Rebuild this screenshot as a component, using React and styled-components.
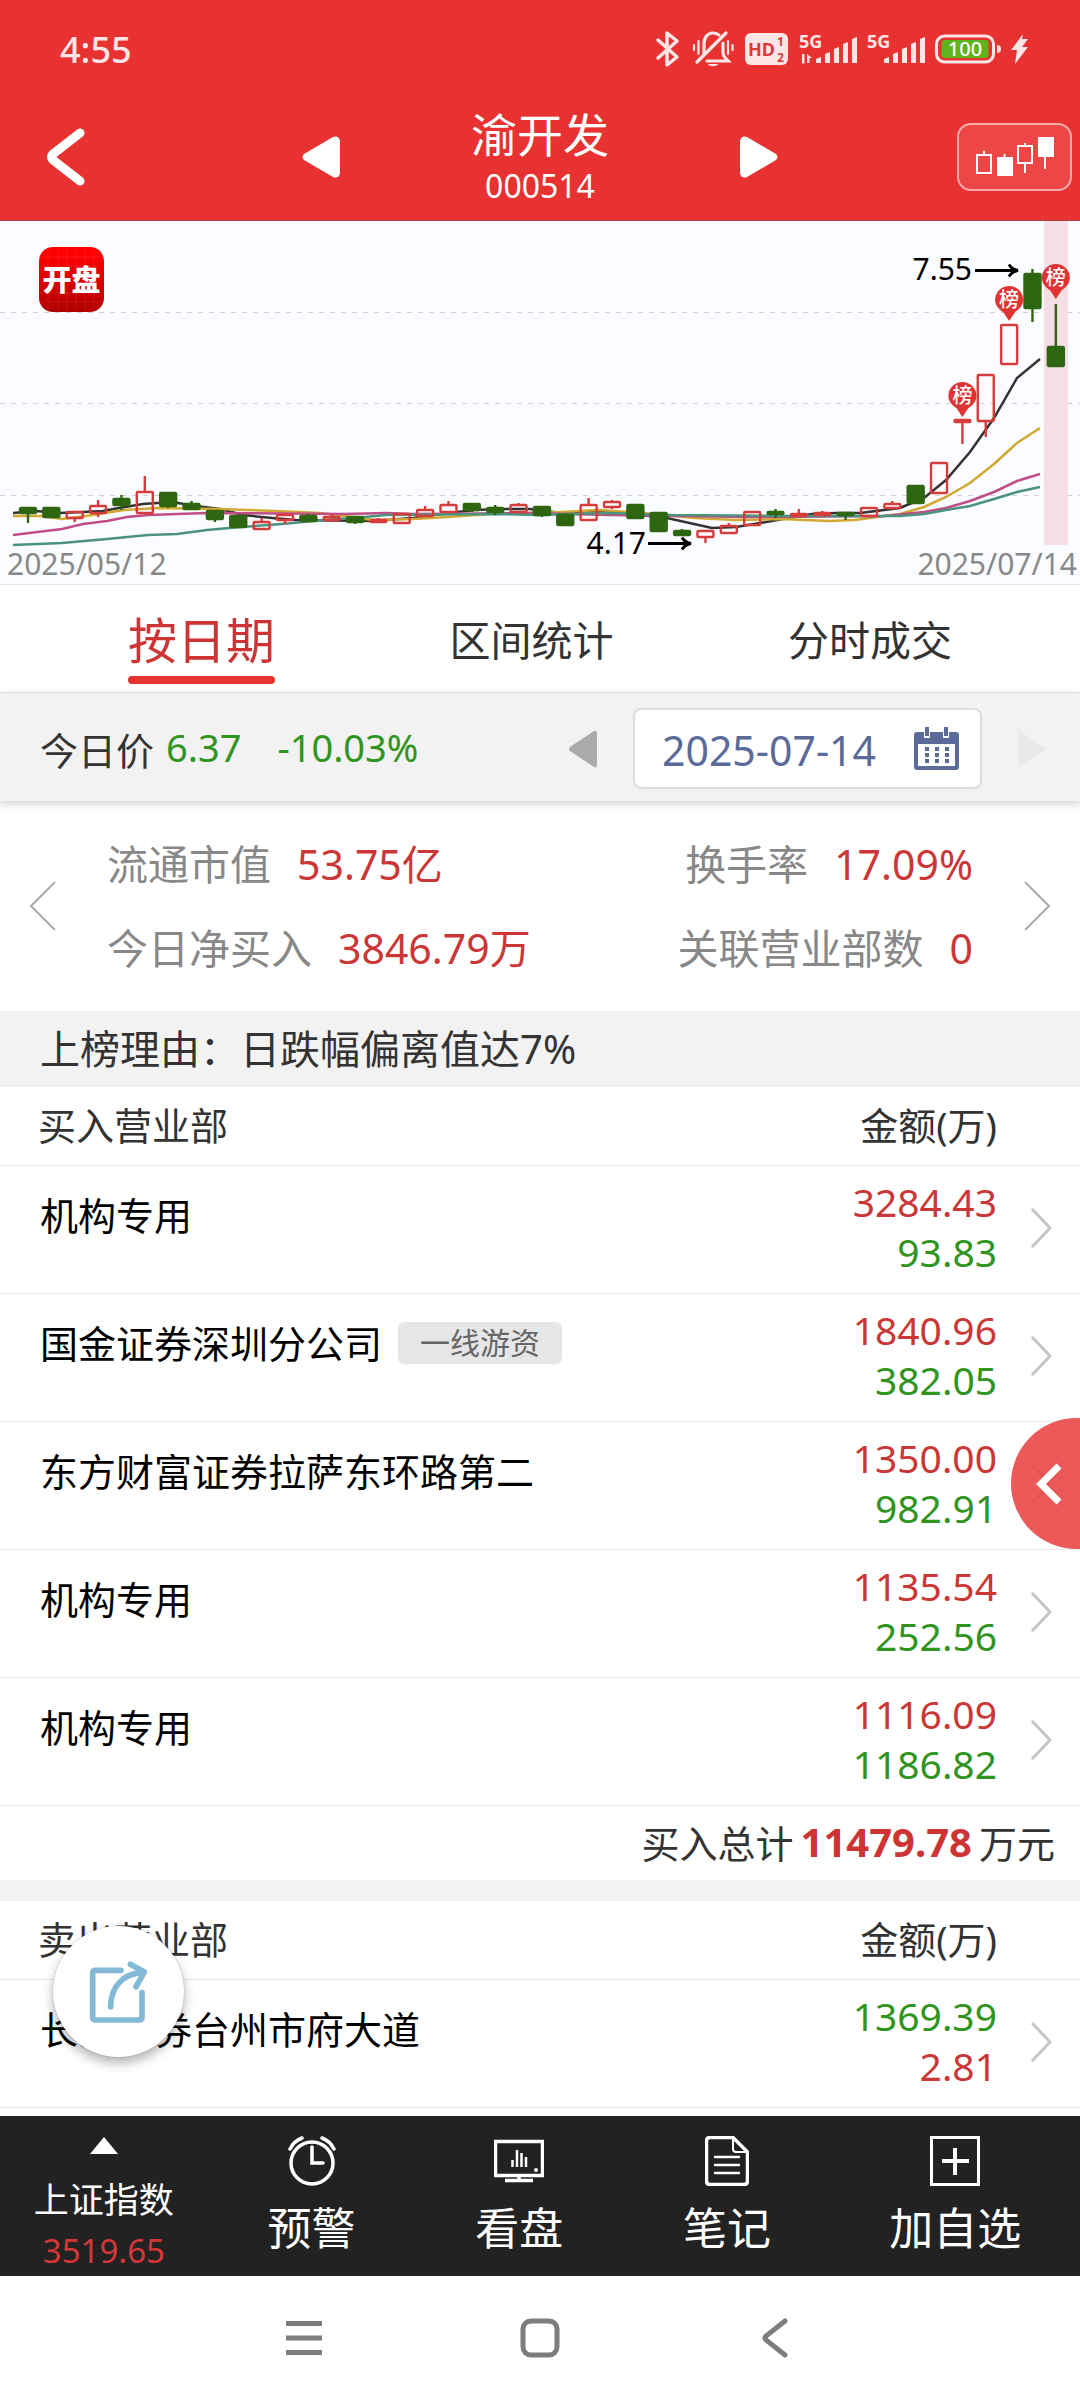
import styled, { createGlobalStyle } from 'styled-components';

const GlobalStyle = createGlobalStyle`
  * {
    box-sizing: border-box;
  }
  body {
    margin: 0;
    background-color: #fff;
    color: #333;
    font-family: 'Noto Sans', 'Noto Sans CJK SC', sans-serif;
  }
  button,
  input {
    font: inherit;
    color: inherit;
  }
  a {
    color: inherit;
    text-decoration: none;
  }
  svg {
    display: block;
  }
`;

const Screen = styled.div`
  position: relative;
  display: flex;
  flex-direction: column;
  min-height: 100vh;
  overflow: hidden;
`;

const IconButton = styled.button`
  display: flex;
  align-items: center;
  justify-content: center;
  padding: 0;
  border: 0;
  background: none;
  cursor: pointer;
`;

// header
const HeaderEl = styled.header`
  background-color: #e83131;
  color: #fff;
  border-bottom: 1px solid #a8404a;
`;

const StatusBar = styled.div`
  display: flex;
  justify-content: space-between;
  align-items: center;
  height: 98px;
  padding: 0 52px 0 60px;
  color: #ffe6e6;
`;

const Clock = styled.span`
  font-size: 36px;
  font-weight: 500;
`;

const StatusIcons = styled.div`
  display: flex;
  align-items: center;
  gap: 10px;
`;

const NavRow = styled.div`
  display: grid;
  grid-template-columns: 1fr 476px 1fr;
  align-items: center;
  height: 122px;
  padding-bottom: 4px;
`;

const StockSwitch = styled.div`
  display: flex;
  justify-content: space-between;
  align-items: center;
`;

const StockTitle = styled.div`
  text-align: center;
`;

const StockName = styled.h1`
  margin: 0;
  font-size: 46px;
  font-weight: 400;
  line-height: 58px;
`;

const StockCode = styled.div`
  font-size: 32px;
  line-height: 46px;
`;

const BackButton = styled(IconButton)`
  justify-self: start;
  margin-left: 46px;
`;

const ChartButton = styled(IconButton)`
  justify-self: end;
  width: 115px;
  height: 68px;
  margin-right: 8px;
  border: 2px solid #f7aaaa;
  border-radius: 14px;
  background-color: #ec4646;
`;

// chart
const ChartBox = styled.section`
  background-color: #fbfcff;
  border-bottom: 1px solid #e6e8eb;
  svg {
    width: 100%;
    height: auto;
  }
`;

// tabs
const Tabs = styled.nav`
  display: flex;
  justify-content: space-between;
  height: 108px;
  padding: 0 128px;
  border-bottom: 1px solid #e2e2e2;
`;

const Tab = styled.a`
  display: flex;
  flex-direction: column;
  align-items: center;
  padding-top: 19px;
  font-size: ${(props) => (props.$active ? '49px' : '41px')};
  line-height: 72px;
  color: ${(props) => (props.$active ? '#cf3434' : '#333')};
  &::after {
    content: '';
    width: 100%;
    height: 8px;
    border-radius: 4px;
    background-color: ${(props) => (props.$active ? '#e63232' : 'transparent')};
  }
`;

const PriceBar = styled.section`
  display: flex;
  justify-content: space-between;
  align-items: center;
  height: 108px;
  padding: 3px 34px 0 40px;
  background-color: #f2f2f2;
  box-shadow: 0 3px 8px rgba(0, 0, 0, 0.18);
`;

const PriceText = styled.div`
  display: flex;
  font-size: 38px;
`;

const Price = styled.span`
  margin-left: 12px;
  color: #2f9420;
`;

const Change = styled.span`
  margin-left: 36px;
  color: #2f9420;
`;

const DatePicker = styled.div`
  display: flex;
  align-items: center;
  gap: 36px;
`;

const DateField = styled.label`
  display: flex;
  align-items: center;
  justify-content: space-between;
  width: 349px;
  height: 81px;
  padding: 0 21px 0 27px;
  border: 2px solid #dcdcdc;
  border-radius: 8px;
  background-color: #fff;
`;

const DateInput = styled.input`
  width: 236px;
  padding: 2px 0 0;
  border: 0;
  outline: 0;
  background: none;
  font-size: 41px;
  color: #5a6b99;
`;

// summary
const Summary = styled.section`
  display: flex;
  justify-content: space-between;
  align-items: center;
  height: 210px;
  padding: 0 28px;
`;

const SummaryGrid = styled.dl`
  flex: 1;
  display: grid;
  grid-template-columns: auto auto;
  justify-content: space-between;
  margin: 0;
  padding: 0 51px;
`;

const Stat = styled.div`
  display: flex;
  justify-content: ${(props) => (props.$right ? 'flex-end' : 'flex-start')};
  gap: 26px;
  font-size: 41px;
  line-height: 84px;
`;

const StatLabel = styled.dt`
  color: #888;
`;

const StatValue = styled.dd`
  margin: 0;
  color: #cb3737;
`;

const Reason = styled.h2`
  margin: 0;
  padding: 0 40px;
  font-size: 40px;
  font-weight: 400;
  line-height: 76px;
  background-color: #f2f2f2;
`;

// broker tables
const BoardTable = styled.table`
  width: 100%;
  border-collapse: separate;
  border-spacing: 0;
`;

const HeadCell = styled.th`
  height: 79px;
  padding: 0 0 5px 38px;
  border-bottom: 1px solid #e8e8e8;
  font-size: 38px;
  font-weight: 400;
  text-align: ${(props) => (props.$right ? 'right' : 'left')};
`;

const Cell = styled.td`
  height: 128px;
  padding: 0;
  border-bottom: 1px solid #e8e8e8;
  vertical-align: top;
`;

const BrokerCell = styled(Cell)`
  padding: 24px 0 0 40px;
`;

const Broker = styled.a`
  display: flex;
  align-items: center;
  gap: 16px;
  color: #000;
  font-size: 38px;
  line-height: 50px;
`;

const Tag = styled.span`
  padding: 0 22px;
  border-radius: 6px;
  background-color: #e6e6e6;
  color: #666;
  font-size: 30px;
  line-height: 42px;
`;

const AmountCell = styled(Cell)`
  padding-top: 11px;
  text-align: right;
`;

const Amount = styled.div`
  font-size: 39px;
  line-height: 50px;
  color: ${(props) => (props.$up ? '#cb3737' : '#2f9420')};
`;

const ArrowCell = styled(Cell)`
  width: 83px;
  padding: 42px 0 0 33px;
`;

const Total = styled.div`
  display: flex;
  justify-content: flex-end;
  align-items: center;
  gap: 7px;
  height: 74px;
  padding: 0 25px 4px 0;
  font-size: 38px;
  strong {
    font-size: 40px;
    color: #cf3434;
  }
`;

const Divider = styled.div`
  height: 21px;
  background-color: #f2f2f2;
`;

const Main = styled.main`
  flex: 1;
`;

// floating buttons
const SideButton = styled(IconButton)`
  position: absolute;
  right: 0;
  top: 1418px;
  width: 69px;
  height: 131px;
  padding-left: 6px;
  border-radius: 66px 0 0 66px;
  background-color: rgba(233, 64, 64, 0.87);
`;

const ShareButton = styled(IconButton)`
  position: absolute;
  left: 53px;
  bottom: 343px;
  width: 131px;
  height: 131px;
  border-radius: 50%;
  background-color: #fff;
  box-shadow: 0 6px 12px rgba(0, 0, 0, 0.3), 0 0 2px rgba(0, 0, 0, 0.2);
`;

// bottom bars
const BottomBar = styled.nav`
  display: flex;
  height: 160px;
  background-color: #222;
  color: #fff;
`;

const BottomLink = styled.a`
  flex: ${(props) => (props.$wide ? 6 : 5)};
  display: flex;
  flex-direction: column;
  align-items: center;
  padding-top: 20px;
  font-size: 44px;
  line-height: 60px;
  svg {
    margin-bottom: 12px;
  }
`;

const IndexLink = styled(BottomLink)`
  font-size: 35px;
  line-height: 51px;
  svg {
    margin-bottom: 20px;
  }
`;

const IndexValue = styled.span`
  font-size: 33px;
  color: #d63636;
`;

const SystemNav = styled.div`
  display: flex;
  height: 124px;
  padding: 0 186px;
  background-color: #fff;
  button {
    flex: 1;
  }
`;

// [up, top, bottom, high, low]
const candles = [
  [0, 287, 292, 287, 302],
  [0, 287, 296, 286, 297],
  [1, 291, 297, 291, 301],
  [1, 285, 292, 279, 296],
  [0, 278, 284, 274, 289],
  [1, 271, 292, 255, 292],
  [0, 272, 285, 272, 287],
  [0, 283, 288, 280, 288],
  [0, 290, 298, 289, 301],
  [0, 295, 306, 295, 306],
  [1, 301, 308, 297, 308],
  [1, 294, 299, 292, 303],
  [0, 295, 300, 293, 301],
  [1, 296, 299, 293, 301],
  [0, 296, 301, 295, 303],
  [1, 299, 301, 297, 302],
  [1, 293, 302, 293, 302],
  [1, 289, 295, 285, 295],
  [1, 284, 291, 280, 291],
  [0, 283, 289, 282, 291],
  [0, 287, 291, 284, 294],
  [1, 284, 291, 282, 291],
  [0, 286, 294, 286, 296],
  [0, 294, 304, 292, 304],
  [1, 284, 299, 277, 299],
  [1, 281, 286, 279, 288],
  [0, 284, 297, 283, 297],
  [0, 292, 310, 292, 310],
  [0, 310, 314, 308, 315],
  [1, 310, 316, 310, 322],
  [1, 305, 312, 302, 312],
  [1, 291, 304, 291, 304],
  [0, 291, 293, 288, 297],
  [1, 293, 295, 288, 295],
  [1, 292, 294, 290, 295],
  [0, 292, 294, 291, 299],
  [1, 287, 295, 287, 295],
  [1, 283, 287, 280, 287],
  [0, 265, 282, 265, 282],
  [1, 242, 272, 242, 272],
  [1, 199, 201, 199, 223],
  [1, 154, 200, 154, 216],
  [1, 104, 143, 104, 143],
  [0, 53, 87, 48, 101],
  [0, 126, 145, 83, 145],
];

const averages = [
  {
    color: '#333',
    points:
      '13,292 36,290 59,292 83,291 103,290 119,287 143,283 172,281 196,285 220,288 243,294 272,297 296,299 372,300 413,297 448,292 475,289 499,288 530,288 561,292 588,290 623,292 667,297 712,307 736,306 760,302 783,298 812,293 836,292 860,292 900,287 924,277 946,259 970,231 994,197 1017,157 1040,138',
  },
  {
    color: '#d1a932',
    points:
      '13,295 41,295 62,298 86,295 124,289 158,287 220,288 275,290 320,292 344,295 372,299 413,298 448,296 492,293 561,291 599,289 643,292 695,297 736,299 781,298 829,300 855,299 877,296 900,293 924,286 946,276 970,262 994,243 1017,222 1040,207',
  },
  {
    color: '#c04d86',
    points:
      '13,314 62,308 83,303 107,300 127,296 148,294 207,292 344,293 386,292 413,293 530,292 609,294 678,295 747,296 884,295 924,291 946,287 970,280 994,271 1017,260 1040,253',
  },
  {
    color: '#4a937f',
    points:
      '13,324 62,322 107,318 148,314 177,313 207,309 241,306 282,303 324,299 365,296 386,294 496,293 537,294 609,292 671,294 781,295 900,295 924,293 946,289 970,285 994,278 1017,271 1040,266',
  },
];

const pins = [
  [40, 175],
  [42, 79],
  [44, 57],
];

const candleX = (i) => 28 + i * 23.36;

function Candle({ index, data }) {
  const [up, top, bottom, high, low] = data;
  const x = candleX(index);
  const color = up ? '#d63c3c' : '#2f6612';
  return (
    <g stroke={color} strokeWidth='2.400'>
      {high < top && <line x1={x} x2={x} y1={high} y2={top} />}
      {low > bottom && <line x1={x} x2={x} y1={bottom} y2={low} />}
      <rect
        x={x - 8}
        y={top}
        width='16'
        height={bottom - top}
        rx='1'
        fill={up ? 'none' : color}
      />
    </g>
  );
}

function Pin({ x, y }) {
  return (
    <g>
      <path
        d={`M${x - 14} ${y}a14 14 0 1 1 28 0c0 6-5 10-8 12l-6 9-6-9c-3-2-8-6-8-12z`}
        fill='#e03333'
      />
      <text x={x} y={y + 7} textAnchor='middle' fontSize='20' fontWeight='500' fill='#fff'>
        榜
      </text>
    </g>
  );
}

function Chart() {
  return (
    <ChartBox>
      <svg viewBox='0 0 1080 363' role='img' aria-label='K线图'>
        <defs>
          <linearGradient id='logoRed' x1='0' y1='0' x2='0' y2='1'>
            <stop offset='0.1' stopColor='#fe0000' />
            <stop offset='1' stopColor='#b00000' />
          </linearGradient>
        </defs>
        {[91, 182, 274].map((y) => (
          <line key={y} x1='0' x2='1080' y1={y + 0.5} y2={y + 0.5} stroke='#d0d2d8' strokeDasharray='5 6' />
        ))}
        <rect x='1044' y='0' width='24' height='324' fill='#f6dfe4' />
        <rect x='39' y='26' width='65' height='65' rx='14' fill='url(#logoRed)' />
        <path
          d='M48 27v63M58 27v63M67 27v63M76 27v63M85 27v63M94 27v63M40 36h63M40 45h63M40 72h63M40 81h63'
          stroke='#fff'
          strokeOpacity='0.08'
        />
        <text x='71.5' y='70' textAnchor='middle' fontSize='29' fontWeight='900' fill='#fff'>
          开盘
        </text>
        {averages.map((line) => (
          <polyline key={line.color} points={line.points} fill='none' stroke={line.color} strokeWidth='2.500' />
        ))}
        {candles.map((data, i) => (
          <Candle key={i} index={i} data={data} />
        ))}
        {pins.map(([i, y]) => (
          <Pin key={i} x={candleX(i)} y={y} />
        ))}
        <g fill='#000' fontSize='30'>
          <text x='972' y='59' textAnchor='end'>
            7.55
          </text>
          <text x='646' y='333' textAnchor='end'>
            4.17
          </text>
        </g>
        <g stroke='#000' strokeWidth='3' fill='none'>
          <path d='M975 49.500h42M1009 43.500q3 5 9 6q-6 1-9 6' />
          <path d='M648 322.500h42M682 316.500q3 5 9 6q-6 1-9 6' />
        </g>
        <g fill='#888' fontSize='30'>
          <text x='7' y='354'>
            2025/05/12
          </text>
          <text x='1077' y='354' textAnchor='end'>
            2025/07/14
          </text>
        </g>
      </svg>
    </ChartBox>
  );
}

function Signal({ data }) {
  return (
    <svg width='58' height='44' viewBox='0 -6 58 44' fill='#ffe6e6'>
      <text x='0' y='15' fontSize='18' fontWeight='700'>
        5G
      </text>
      {data && <path d='M0 26l3 4.500V21h2.500v9.500H3zM8 30v-9l5 4h-2.500v5z' />}
      <path d='M17 30v-4l5-2v6zM26 30v-9l5-2v11zM35 30V16l5-2v16zM44 30V11l5-2v21zM53 30V6l5-2v26z' />
    </svg>
  );
}

function Header() {
  return (
    <HeaderEl>
      <StatusBar>
        <Clock>4:55</Clock>
        <StatusIcons>
          <svg width='28' height='38' viewBox='0 0 28 38' fill='none' stroke='#ffe6e6' strokeWidth='3.500' strokeLinejoin='round' strokeLinecap='round'>
            <path d='M4 10l19 17-10 8V3l10 8L4 28' />
          </svg>
          <svg width='42' height='38' viewBox='0 0 42 38' fill='none' stroke='#ffe6e6' strokeWidth='3.200' strokeLinecap='round'>
            <path d='M12 24V14C12 7 16 3 21 3c2.500 0 4 .6 6 2M31 13v10c0 3 2 5 5 8H15M34 3L5 32' />
            <path d='M2 15v5M6.500 11v13M36 11v13M40.500 15v5' strokeWidth='2.200' />
            <path d='M16 34h10c-1 3-9 3-10 0z' fill='#ffe6e6' stroke='none' />
          </svg>
          <svg width='45' height='34' viewBox='0 0 45 34'>
            <rect x='1' y='1' width='43' height='32' rx='6' fill='#ffe6e6' />
            <g fill='#d93a3a' fontWeight='700'>
              <text x='4' y='24' fontSize='18'>
                HD
              </text>
              <text x='33' y='14' fontSize='12'>
                1
              </text>
              <text x='33' y='30' fontSize='12'>
                2
              </text>
            </g>
          </svg>
          <Signal data />
          <Signal />
          <svg width='66' height='30' viewBox='2 0 66 30'>
            <rect x='3.500' y='2' width='57' height='26' rx='8' fill='none' stroke='#ffe6e6' strokeWidth='3' />
            <rect x='8.500' y='6' width='47' height='18' rx='3' fill='#5fb31c' />
            <path d='M64 11q4 0 4 4t-4 4z' fill='#ffe6e6' />
            <text x='32' y='22' textAnchor='middle' fontSize='20' fontWeight='500' fill='#fff'>
              100
            </text>
          </svg>
          <svg width='17' height='30' viewBox='0 0 17 30' fill='#ffe6e6'>
            <path d='M12 0L0 16h6L4 30 17 13h-6l6-8h-6z' />
          </svg>
        </StatusIcons>
      </StatusBar>
      <NavRow>
        <BackButton aria-label='返回'>
          <svg width='40' height='60' viewBox='0 0 40 60' fill='none' stroke='#fff' strokeWidth='9' strokeLinecap='round' strokeLinejoin='round'>
            <path d='M34 6L7 27q-3 3 0 6l27 21' />
          </svg>
        </BackButton>
        <StockSwitch>
          <IconButton aria-label='上一只'>
            <svg width='38' height='44' viewBox='0 0 38 44' fill='#fff'>
              <path d='M2 19L31 2q6-2 7 4v32q-1 6-7 4L2 25q-3-3 0-6z' />
            </svg>
          </IconButton>
          <StockTitle>
            <StockName>渝开发</StockName>
            <StockCode>000514</StockCode>
          </StockTitle>
          <IconButton aria-label='下一只'>
            <svg width='38' height='44' viewBox='0 0 38 44' fill='#fff'>
              <path d='M36 19L7 2Q1 0 0 6v32q1 6 7 4l29-17q3-3 0-6z' />
            </svg>
          </IconButton>
        </StockSwitch>
        <ChartButton aria-label='K线'>
          <svg width='78' height='42' viewBox='0 0 78 42' fill='none' stroke='#fff' strokeWidth='2'>
            <path d='M1 19h14v18H1zM8 15v4M42 10h14v17H42zM49 7v3M49 27v10M28.500 18v4M69 20v13' />
            <path d='M21 21h16v19H21zM62 1h16v20H62z' fill='#fff' stroke='none' />
          </svg>
        </ChartButton>
      </NavRow>
    </HeaderEl>
  );
}

function CalendarIcon() {
  return (
    <svg width='45' height='43' viewBox='0 0 45 43'>
      <path d='M3 5h39q3 0 3 3v32q0 3-3 3H3q-3 0-3-3V8q0-3 3-3z' fill='#5a6b99' />
      <path d='M4 17h37v22H4z' fill='#fff' />
      <path d='M10 0h6v11h-6zM29 0h6v11h-6z' fill='#fff' />
      <path d='M11 0h4v9h-4zM30 0h4v9h-4z' fill='#5a6b99' />
      <path d='M11 22h24M11 28h24M11 34h24' stroke='#5a6b99' strokeWidth='4' strokeDasharray='4 6' />
    </svg>
  );
}

function ThinArrow({ left }) {
  return (
    <svg width='28' height='50' viewBox='0 0 28 50' fill='none' stroke='#aaa' strokeWidth='2'>
      <path d={left ? 'M27 1L3 25l24 24' : 'M1 1l24 24L1 49'} />
    </svg>
  );
}

const buyers = [
  { name: '机构专用', buy: '3284.43', sell: '93.83' },
  { name: '国金证券深圳分公司', tag: '一线游资', buy: '1840.96', sell: '382.05' },
  { name: '东方财富证券拉萨东环路第二', buy: '1350.00', sell: '982.91' },
  { name: '机构专用', buy: '1135.54', sell: '252.56' },
  { name: '机构专用', buy: '1116.09', sell: '1186.82' },
];

const sellers = [{ name: '长江证券台州市府大道', buy: '2.81', sell: '1369.39' }];

function Board({ title, rows, sellFirst }) {
  return (
    <BoardTable>
      <thead>
        <tr>
          <HeadCell scope='col'>{title}</HeadCell>
          <HeadCell scope='col' $right>
            金额(万)
          </HeadCell>
          <HeadCell />
        </tr>
      </thead>
      <tbody>
        {rows.map((row, i) => (
          <tr key={i}>
            <BrokerCell>
              <Broker href='#'>
                {row.name}
                {row.tag && <Tag>{row.tag}</Tag>}
              </Broker>
            </BrokerCell>
            <AmountCell>
              <Amount $up={!sellFirst}>{sellFirst ? row.sell : row.buy}</Amount>
              <Amount $up={sellFirst}>{sellFirst ? row.buy : row.sell}</Amount>
            </AmountCell>
            <ArrowCell>
              <svg width='22' height='40' viewBox='0 0 22 40' fill='none' stroke='#c6c6c6' strokeWidth='3'>
                <path d='M2 1l18 19L2 39' />
              </svg>
            </ArrowCell>
          </tr>
        ))}
      </tbody>
    </BoardTable>
  );
}

function Footer() {
  return (
    <>
      <BottomBar>
        <IndexLink href='#'>
          <svg width='30' height='18' viewBox='0 0 30 18' fill='#fff'>
            <path d='M15 1l14 17H1z' />
          </svg>
          <span>上证指数</span>
          <IndexValue>3519.65</IndexValue>
        </IndexLink>
        <BottomLink href='#'>
          <svg width='50' height='50' viewBox='0 0 50 50' fill='none' stroke='#fff' strokeWidth='3.500' strokeLinecap='round'>
            <circle cx='25' cy='27' r='21' />
            <path d='M25 11v16h11M3 13Q7 5 15 2M47 13Q43 5 35 2' />
          </svg>
          预警
        </BottomLink>
        <BottomLink href='#'>
          <svg width='50' height='50' viewBox='0 0 50 50' fill='none' stroke='#fff' strokeWidth='3.500'>
            <path d='M0 5.500h50M1.500 5v36M48.500 5v36M0 39.500h50M25 40v5M11 44.500h28' />
            <path d='M18.500 24v7M23 14v17M27.500 17v14M32 21v10' strokeWidth='2.500' />
            <circle cx='42' cy='34' r='2' fill='#fff' stroke='none' />
          </svg>
          看盘
        </BottomLink>
        <BottomLink href='#'>
          <svg width='44' height='50' viewBox='0 0 44 50' fill='none' stroke='#fff' strokeWidth='3.500'>
            <path d='M5 1.500h23L42.500 16v29q0 3.500-3.500 3.500H5q-3.500 0-3.500-3.500V5Q1.500 1.500 5 1.500z' />
            <path d='M28 2v11q0 3 3 3h11' strokeWidth='2' />
            <path d='M10 21h24M10 29h24M10 37h24' strokeWidth='2.500' strokeLinecap='round' />
          </svg>
          笔记
        </BottomLink>
        <BottomLink href='#' $wide>
          <svg width='50' height='50' viewBox='0 0 50 50' fill='none' stroke='#fff' strokeWidth='3'>
            <path d='M1.500 1.500h47v47h-47z' />
            <path d='M12 25h27M25 12v27' strokeWidth='4' />
          </svg>
          加自选
        </BottomLink>
      </BottomBar>
      <SystemNav>
        <IconButton aria-label='最近任务'>
          <svg width='36' height='40' viewBox='0 0 36 40' stroke='#7d7d7d' strokeWidth='5'>
            <path d='M0 5.500h36M0 20h36M0 34.500h36' />
          </svg>
        </IconButton>
        <IconButton aria-label='主页'>
          <svg width='40' height='40' viewBox='0 0 40 40' fill='none' stroke='#7d7d7d' strokeWidth='5'>
            <rect x='3' y='3' width='34' height='34' rx='8' />
          </svg>
        </IconButton>
        <IconButton aria-label='返回'>
          <svg width='28' height='40' viewBox='0 0 28 40' fill='none' stroke='#7d7d7d' strokeWidth='5' strokeLinecap='round'>
            <path d='M23 3L4 18q-2 2 0 4l19 15' />
          </svg>
        </IconButton>
      </SystemNav>
    </>
  );
}

function App() {
  return (
    <Screen>
      <GlobalStyle />
      <Header />
      <Main>
        <Chart />
        <Tabs>
          <Tab href='#' $active>
            按日期
          </Tab>
          <Tab href='#'>区间统计</Tab>
          <Tab href='#'>分时成交</Tab>
        </Tabs>
        <PriceBar>
          <PriceText>
            今日价<Price>6.37</Price>
            <Change>-10.03%</Change>
          </PriceText>
          <DatePicker>
            <IconButton aria-label='前一天'>
              <svg width='28' height='38' viewBox='0 0 28 38' fill='#aaa'>
                <path d='M1 17L25 1q3-1 3 2v32q0 3-3 2L1 21q-2-2 0-4z' />
              </svg>
            </IconButton>
            <DateField>
              <DateInput aria-label='日期' defaultValue='2025-07-14' readOnly />
              <CalendarIcon />
            </DateField>
            <IconButton aria-label='后一天'>
              <svg width='28' height='38' viewBox='0 0 28 38' fill='#e9e9e9'>
                <path d='M0 0l28 19L0 38z' />
              </svg>
            </IconButton>
          </DatePicker>
        </PriceBar>
        <Summary>
          <IconButton aria-label='上一页'>
            <ThinArrow left />
          </IconButton>
          <SummaryGrid>
            <Stat>
              <StatLabel>流通市值</StatLabel>
              <StatValue>53.75亿</StatValue>
            </Stat>
            <Stat $right>
              <StatLabel>换手率</StatLabel>
              <StatValue>17.09%</StatValue>
            </Stat>
            <Stat>
              <StatLabel>今日净买入</StatLabel>
              <StatValue>3846.79万</StatValue>
            </Stat>
            <Stat $right>
              <StatLabel>关联营业部数</StatLabel>
              <StatValue>0</StatValue>
            </Stat>
          </SummaryGrid>
          <IconButton aria-label='下一页'>
            <ThinArrow />
          </IconButton>
        </Summary>
        <Reason>上榜理由：日跌幅偏离值达7%</Reason>
        <Board title='买入营业部' rows={buyers} />
        <Total>
          买入总计
          <strong>11479.78</strong>
          万元
        </Total>
        <Divider />
        <Board title='卖出营业部' rows={sellers} sellFirst />
      </Main>
      <Footer />
      <SideButton aria-label='展开'>
        <svg width='28' height='42' viewBox='0 0 28 42' fill='none' stroke='#fff' strokeWidth='7'>
          <path d='M24 3L6 21l18 18' />
        </svg>
      </SideButton>
      <ShareButton aria-label='分享'>
        <svg width='66' height='66' viewBox='138 174 198 198' fill='none' stroke='#82b9d6' strokeWidth='17' strokeLinecap='round' strokeLinejoin='round'>
          <path d='M243 208h-76q-9 0-9 9v131q0 9 9 9h130q9 0 9-9v-73' />
          <path d='M212 317c0-58 36-100 96-102M271 190l42 23-25 44' />
        </svg>
      </ShareButton>
    </Screen>
  );
}
export default App;
